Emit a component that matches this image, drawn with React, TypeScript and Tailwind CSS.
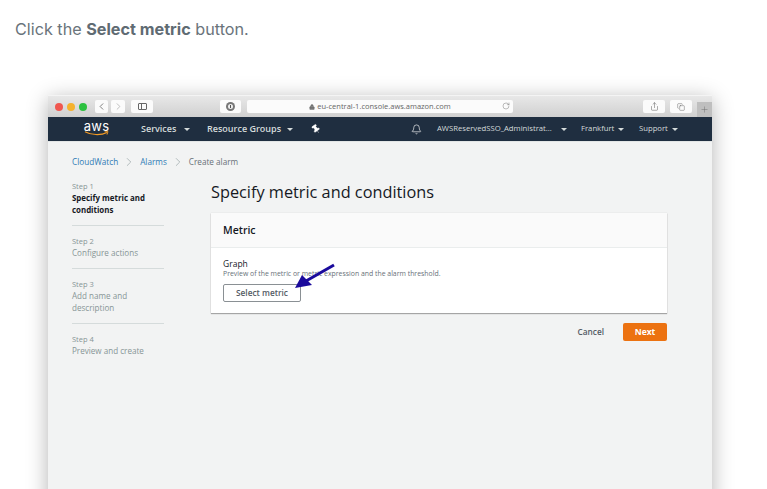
import { ChevronLeft, ChevronRight, Bell, RotateCw, Lock, Plus, Share, Copy, Pin } from "lucide-react";

const sans = "font-['Open_Sans','Noto_Sans',sans-serif]";

const steps = [
  { label: "Step 1", lines: ["Specify metric and", "conditions"], active: true },
  { label: "Step 2", lines: ["Configure actions"] },
  { label: "Step 3", lines: ["Add name and", "description"] },
  { label: "Step 4", lines: ["Preview and create"] },
];

function Caret({ className }: { className: string }) {
  return <span className={`inline-block w-0 h-0 border-x-[3px] border-x-transparent border-t-[3px] border-t-[#d5dbdb] ${className}`} />;
}

function ChromeButton({ children, className }: { children: React.ReactNode; className: string }) {
  return (
    <div className={`h-[13px] bg-[#fbfbfb] rounded-[2px] flex items-center justify-center text-[#555] ${className}`}>
      {children}
    </div>
  );
}

export default function App() {
  return (
    <div className="w-[767px] h-[489px] overflow-hidden bg-white font-['Inter',sans-serif]">
      {/* Instruction line */}
      <p className="pl-[15px] pt-[19px] h-[95px] text-[16.2px] leading-[20px] text-[#6a747b] font-['Inter',sans-serif]">
        Click the <strong className="font-bold text-[#5f6b73]">Select metric</strong> button.
      </p>

      {/* Browser window */}
      <div className={`ml-[48px] w-[664px] h-[420px] shadow-[0_4px_20px_rgba(0,0,0,0.3)] flex flex-col ${sans}`}>
        {/* Safari toolbar */}
        <div className="h-[22px] shrink-0 flex items-center bg-gradient-to-b from-[#e8e8e8] to-[#d0d0d0] border-t border-[#f4f4f4] relative">
          <div className="flex gap-[4px] ml-[7px]">
            <span className="w-[8px] h-[8px] rounded-full bg-[#f0574f]" />
            <span className="w-[8px] h-[8px] rounded-full bg-[#f5b22e]" />
            <span className="w-[8px] h-[8px] rounded-full bg-[#2cc13f]" />
          </div>
          <div className="flex gap-[3px] ml-[8px]">
            <ChromeButton className="w-[13px]"><ChevronLeft size={11} strokeWidth={1.6} /></ChromeButton>
            <ChromeButton className="w-[14px]"><ChevronRight size={11} strokeWidth={1.6} className="text-[#aaa]" /></ChromeButton>
          </div>
          <ChromeButton className="w-[22px] ml-[6px]">
            <span className="w-[9px] h-[7px] border border-[#666] rounded-[1px] flex">
              <span className="w-[3px] border-r border-[#666]" />
            </span>
          </ChromeButton>
          <ChromeButton className="w-[21px] ml-[67px]">
            <span className="w-[9px] h-[9px] rounded-full bg-[#777] flex items-center justify-center">
              <span className="w-[5px] h-[5px] rounded-full bg-[#eee] flex items-center justify-center">
                <span className="w-px h-[3px] bg-[#555]" />
              </span>
            </span>
          </ChromeButton>
          <ChromeButton className="w-[266px] ml-[6px] relative">
            <span className="flex items-center gap-[2px] text-[7.5px] text-[#666]">
              <Lock size={6} fill="#777" strokeWidth={1.5} />
              eu-central-1.console.aws.amazon.com
            </span>
            <RotateCw size={8} strokeWidth={1.3} className="absolute right-[3px] top-[2px] text-[#666]" />
          </ChromeButton>
          <ChromeButton className="w-[22px] ml-[130px]"><Share size={9} strokeWidth={1.3} /></ChromeButton>
          <ChromeButton className="w-[22px] ml-[5px]"><Copy size={8} strokeWidth={1.3} /></ChromeButton>
          <div className="absolute right-0 bottom-0 w-[15px] h-[15px] bg-[#bfbfbf] flex items-center justify-center text-[#6b6b6b]">
            <Plus size={9} strokeWidth={1.2} />
          </div>
        </div>

        {/* AWS nav */}
        <div className="h-[24px] shrink-0 bg-[#1f2e40] flex items-center text-[#d5dbdb] font-semibold">
          <div className="ml-[36px] w-[25px] flex flex-col items-center relative -top-px">
            <span className="text-[13px] leading-[11px] font-normal text-white font-['Inter',sans-serif] tracking-[0.2px]">aws</span>
            <svg width="25" height="5" viewBox="0 0 25 5" className="-mt-px">
              <path d="M1 0.8C7 4.2 17 4.6 23 1.4" fill="none" stroke="#f59b24" strokeWidth="1.1" />
              <path d="M20.6 0.8L24 0.6L23 3.6" fill="none" stroke="#f59b24" strokeWidth="0.9" />
            </svg>
          </div>
          <span className="ml-[32px] w-[36px] text-[9px] whitespace-nowrap">Services</span>
          <Caret className="ml-[7px]" />
          <span className="ml-[17px] w-[74px] text-[9px] whitespace-nowrap">Resource Groups</span>
          <Caret className="ml-[6px]" />
          <Pin size={10} fill="#fff" strokeWidth={1} className="ml-[18px] text-white -rotate-[35deg]" />
          <Bell size={11} strokeWidth={1.4} className="ml-[90px] text-white" />
          <span className="ml-[15px] w-[117px] font-normal text-[7.7px] whitespace-nowrap">AWSReservedSSO_Administrat...</span>
          <Caret className="ml-[7px]" />
          <span className="ml-[14px] w-[33px] font-normal text-[7.7px] whitespace-nowrap">Frankfurt</span>
          <Caret className="ml-[4px]" />
          <span className="ml-[15px] w-[28px] font-normal text-[7.7px] whitespace-nowrap">Support</span>
          <Caret className="ml-[5px]" />
        </div>

        {/* Console body */}
        <div className="flex-1 bg-[#f2f3f3] border-t border-[#e3e6e6] pl-[24px] pr-[45px] relative">
          <div className="flex items-center pt-[9px] h-[31px] text-[8.2px] leading-[12px]">
            <span className="text-[#2f7bb5]">CloudWatch</span>
            <ChevronRight size={14} strokeWidth={1} className="mx-[4px] text-[#879596]" />
            <span className="text-[#2f7bb5]">Alarms</span>
            <ChevronRight size={14} strokeWidth={1} className="mx-[4px] text-[#879596]" />
            <span className="text-[#687078]">Create alarm</span>
          </div>

          <div className="flex mt-[7px]">
            {/* Steps */}
            <div className="w-[92px] shrink-0 flex flex-col">
              {steps.map((s, i) => (
                <div key={s.label} className={i < 3 ? "pb-[9px] mb-[9px] border-b border-[#d5dbdb]" : ""}>
                  <div className="text-[7.5px] leading-[12px] text-[#879596]">{s.label}</div>
                  {s.lines.map((l) => (
                    <div
                      key={l}
                      className={s.active ? "text-[7.9px] leading-[12px] font-bold text-[#16191f]" : "text-[8.1px] leading-[12px] text-[#879596]"}
                    >
                      {l}
                    </div>
                  ))}
                </div>
              ))}
            </div>

            {/* Main column */}
            <div className="ml-[47px] flex-1 mt-px">
              <h1 className="text-[16.3px] leading-[22px] text-[#16191f] font-normal mb-[10px]">Specify metric and conditions</h1>
              <div className="bg-white shadow-[0_1px_1px_rgba(0,0,0,0.3),0_0_1px_rgba(0,0,0,0.15)] relative">
                <div className="h-[35px] pt-[2px] bg-[#fafafa] border-b border-[#eaeded] flex items-center px-[12px] text-[10.5px] font-semibold text-[#16191f]">
                  Metric
                </div>
                <div className="h-[65px] px-[12px] pt-[10px]">
                  <div className="text-[8.5px] leading-[11px] text-[#16191f]">Graph</div>
                  <div className="text-[6.9px] leading-[9px] text-[#687078]">Preview of the metric or metric expression and the alarm threshold.</div>
                  <div className="mt-[6px] w-[78px] h-[18px] border border-[#8a9094] rounded-[2px] bg-white flex items-center justify-center text-[8.3px] font-semibold text-[#545b64]">
                    Select metric
                  </div>
                </div>
                {/* Annotation arrow */}
                <svg width="44" height="30" viewBox="0 0 44 30" className="absolute left-[83px] top-[49px]">
                  <path d="M40 3L12 19" stroke="#1a0a9c" strokeWidth="3" fill="none" />
                  <path d="M1 26L8 13L18 23Z" fill="#1a0a9c" />
                </svg>
              </div>
              <div className="flex justify-end items-center mt-[10px]">
                <span className="text-[8.3px] font-semibold text-[#545b64] mr-[19px]">Cancel</span>
                <div className="w-[44px] h-[18px] bg-[#ec7211] rounded-[2px] flex items-center justify-center text-[8.5px] font-bold text-white">
                  Next
                </div>
              </div>
            </div>
          </div>
        </div>
      </div>
    </div>
  );
}
